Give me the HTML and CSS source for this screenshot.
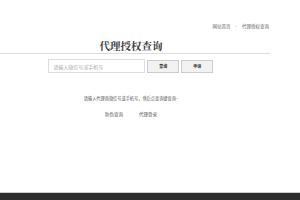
FILE: index.html
```html
<!doctype html>
<html lang="zh-CN">
<head>
<meta charset="utf-8" />
<meta name="viewport" content="width=device-width" />
<title>代理授权查询</title>
<link rel="stylesheet" href="styles.css">
</head>
<body>

<div class="crumbs">
  <a href="#">网站首页</a>
  <span class="sep">-</span>
  <span>代理授权查询</span>
</div>

<div class="main">
  <h1 class="title">代理授权查询</h1>

  <form class="search">
    <input class="search-input" type="text" placeholder="请输入微信号或手机号">
    <button class="btn" type="button">查询</button>
    <button class="btn" type="button">申请</button>
  </form>

  <p class="tip">请输入代理商微信号或手机号，然后点查询键查询~</p>

  <p class="links">
    <a href="#">防伪查询</a>
    <a href="#">代理登录</a>
  </p>
</div>

<div class="footer"></div>

</body>
</html>
```

FILE: styles.css
```css
* { box-sizing: border-box; }

html, body {
  margin: 0;
  height: 100%;
}

body {
  display: flex;
  flex-direction: column;
  background: #fff;
  font-family: "Noto Sans CJK SC", "Liberation Sans", sans-serif;
  color: #555;
}

a {
  color: #555;
  text-decoration: none;
}

.crumbs {
  display: flex;
  justify-content: flex-end;
  align-items: center;
  gap: 5px;
  padding: 23px 31px 0 0;
  font-size: 4.5px;
  line-height: 6px;
  color: #666;
}

.crumbs a { color: #666; }

.main {
  width: 270px;
  padding-right: 8px;
}

.title {
  margin: 10px -8px 0 0;
  padding: 0 8px 1px 0;
  border-bottom: 1px solid #ddd;
  text-align: center;
  font-family: "Noto Serif CJK SC", "Liberation Serif", "Noto Sans CJK SC", serif;
  font-size: 10.5px;
  line-height: 13px;
  font-weight: bold;
  color: #3a3a3a;
}

.search {
  display: flex;
  justify-content: center;
  gap: 2px;
  margin: 5px 0 0;
}

.search-input {
  width: 97px;
  height: 14px;
  margin: 0 0 0 -0.5px;
  padding: 0 0 0 4px;
  border: 1px solid #ddd;
  font-family: inherit;
  font-size: 5px;
  color: #555;
  outline: none;
}

.search-input::placeholder { color: #aaa; }

.btn {
  width: 32px;
  height: 13px;
  margin-top: 0.5px;
  padding: 0;
  border: 1px solid #ccc;
  background: #f2f2f2;
  font-family: inherit;
  font-size: 4px;
  font-weight: bold;
  color: #333;
}

.tip {
  margin: 22px 0 0;
  text-align: center;
  font-size: 4.2px;
  line-height: 6px;
}

.links {
  display: flex;
  justify-content: center;
  gap: 16px;
  margin: 10px 0 0;
  font-size: 4.5px;
  line-height: 6px;
}

.footer {
  margin-top: auto;
  height: 8px;
  border-top: 1px solid #ccc;
  background: #2d2d2d;
}
```
